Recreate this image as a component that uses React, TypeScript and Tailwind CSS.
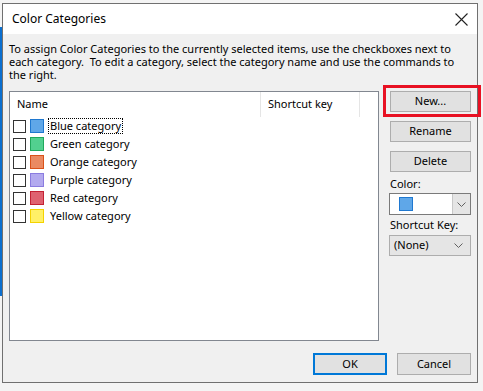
import React from "react";

const categories = [
  { name: "Blue category", fill: "#5fa7e8", border: "#1f78d0" },
  { name: "Green category", fill: "#52d08f", border: "#20a85c" },
  { name: "Orange category", fill: "#ea8a62", border: "#d9521a" },
  { name: "Purple category", fill: "#b3aaef", border: "#8b7ce0" },
  { name: "Red category", fill: "#df6270", border: "#c42234" },
  { name: "Yellow category", fill: "#fff067", border: "#f4d200" },
];

const Chevron = () => (
  <svg width="9" height="5" viewBox="0 0 9 5" fill="none">
    <path d="M0.5 0.5 L4.5 4.5 L8.5 0.5" stroke="#606060" strokeWidth="1" />
  </svg>
);

export default function App() {
  return (
    <div
      className="relative flex w-[483px] h-[391px] bg-[#f4f4f4] text-[11px] text-black"
      style={{ fontFamily: '"Noto Sans", "Segoe UI", sans-serif' }}
    >
      <div className="w-[2px] h-[269px] mt-[27px] bg-[#0b6fcf]" />
      <div className="flex flex-col w-[476px] h-[380px] mt-[3px] border border-[#707070] bg-[#f0f0f0]">
        <div className="flex items-center justify-between h-[30px] bg-white pl-[9px] pr-[8px]">
          <span className="text-[12px]">Color Categories</span>
          <svg width="13" height="13" viewBox="0 0 13 13" className="mr-[1px]">
            <path d="M0.5 0.5 L12.5 12.5 M12.5 0.5 L0.5 12.5" stroke="#222" strokeWidth="1.1" />
          </svg>
        </div>
        <div className="flex flex-col flex-1 px-[6px]">
          <p className="mt-[8px] leading-[13px] h-[39px]">
            To assign Color Categories to the currently selected items, use the checkboxes next to each
            category.&nbsp; To edit a category, select the category name and use the commands to the
            right.
          </p>
          <div className="flex mt-[10px] gap-[10px]">
            <div className="w-[371px] h-[250px] border border-[#828790] bg-white">
              <div className="flex h-[25px] items-center">
                <div className="w-[250px] pl-[7px]">Name</div>
                <div className="w-[100px] h-full flex items-center pl-[7px] border-l border-r border-[#e5e5e5]">
                  Shortcut key
                </div>
              </div>
              <div className="flex flex-col">
                {categories.map((c, i) => (
                  <div key={c.name} className="flex items-center h-[18px] pl-[3px]">
                    <span className="w-[13px] h-[13px] border border-[#333] bg-white" />
                    <span
                      className="w-[14px] h-[14px] ml-[4px] border"
                      style={{ background: c.fill, borderColor: c.border }}
                    />
                    <span
                      className={
                        i === 0
                          ? "ml-[4px] px-[1px] leading-[14px] border border-dotted border-black"
                          : "ml-[4px] px-[1px] leading-[14px] border border-transparent"
                      }
                    >
                      {c.name}
                    </span>
                  </div>
                ))}
              </div>
            </div>
            <div className="flex flex-col w-[82px]">
              <button className="ml-[1px] w-[81px] h-[21px] border border-[#adadad] bg-[#e1e1e1]">New...</button>
              <button className="ml-[1px] mt-[9px] w-[81px] h-[21px] border border-[#adadad] bg-[#e1e1e1]">
                Rename
              </button>
              <button className="ml-[1px] mt-[9px] w-[81px] h-[21px] border border-[#adadad] bg-[#e1e1e1]">
                Delete
              </button>
              <div className="mt-[4px] h-[16px] pl-[1px] leading-[16px]">Color:</div>
              <div className="flex mt-[1px] w-[82px] h-[22px] border border-[#7a7a7a] bg-white">
                <div className="flex-1 flex items-center pl-[9px]">
                  <span className="w-[14px] h-[14px] border border-[#1f78d0] bg-[#5fa7e8]" />
                </div>
                <div className="w-[18px] flex items-center justify-center bg-[#e5e5e5] border-l border-[#c8c8c8]">
                  <Chevron />
                </div>
              </div>
              <div className="mt-[2px] h-[16px] pl-[1px] leading-[16px]">Shortcut Key:</div>
              <div className="flex items-center justify-between mt-[2px] w-[82px] h-[21px] border border-[#adadad] bg-[#e5e5e5] pl-[4px] pr-[7px]">
                <span>(None)</span>
                <Chevron />
              </div>
            </div>
          </div>
          <div className="flex justify-end mt-[12px] gap-[10px]">
            <button className="w-[74px] h-[22px] border-2 border-[#0078d7] bg-[#e1e1e1]">OK</button>
            <button className="w-[74px] h-[22px] border border-[#adadad] bg-[#e1e1e1]">Cancel</button>
          </div>
        </div>
      </div>
      <div className="absolute left-[383px] top-[85px] w-[98px] h-[32px] border-[3px] border-[#e81123]" />
    </div>
  );
}
